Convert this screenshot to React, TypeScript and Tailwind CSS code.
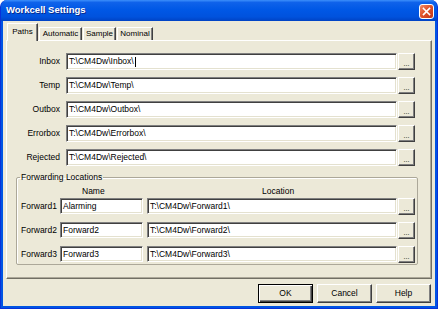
import React from "react";

const font = { fontFamily: '"Liberation Sans", Arial, sans-serif' };

const sunken =
  "bg-white border border-t-[#808080] border-l-[#808080] border-b-white border-r-white shadow-[inset_1px_1px_0_#404040,inset_-1px_-1px_0_#e4e1cf]";
const raised =
  "bg-[#ECE9D8] border border-t-white border-l-white border-b-[#404040] border-r-[#404040] shadow-[inset_-1px_-1px_0_#808080]";

function Dots() {
  return (
    <div className={`${raised} w-[17px] h-[17px] flex items-end justify-center pb-[2px] text-[7px] leading-none text-black`}>
      ...
    </div>
  );
}

function Field({ value, w, caret }: { value: string; w: string; caret?: boolean }) {
  return (
    <div className={`${sunken} ${w} h-full flex items-center pl-[2px] text-[8.5px] leading-none text-black whitespace-nowrap overflow-hidden`}>
      <span>{value}</span>
      {caret && <span className="inline-block w-px h-[10px] bg-black ml-px" />}
    </div>
  );
}

const paths = [
  ["Inbox", "T:\\CM4Dw\\Inbox\\"],
  ["Temp", "T:\\CM4Dw\\Temp\\"],
  ["Outbox", "T:\\CM4Dw\\Outbox\\"],
  ["Errorbox", "T:\\CM4Dw\\Errorbox\\"],
  ["Rejected", "T:\\CM4Dw\\Rejected\\"],
];

const forwards = [
  ["Forward1", "Alarming", "T:\\CM4Dw\\Forward1\\"],
  ["Forward2", "Forward2", "T:\\CM4Dw\\Forward2\\"],
  ["Forward3", "Forward3", "T:\\CM4Dw\\Forward3\\"],
];

export default function App() {
  return (
    <div className="w-[438px] h-[309px] bg-white" style={font}>
      <div className="w-full h-full rounded-t-[7px] overflow-hidden bg-[#0054E3] flex flex-col border border-[#0831D9] border-t-0">
        {/* Title bar */}
        <div className="h-[21px] shrink-0 flex items-start pl-[5px] pr-[3px] bg-[linear-gradient(to_bottom,#3c8ffb_0%,#0f62ea_12%,#0058e6_45%,#0052dd_80%,#0043c4_100%)]">
          <div className="mt-[5px] text-[9.5px] font-bold leading-none text-white [text-shadow:1px_1px_0_#0a2a8a]">
            Workcell Settings
          </div>
          <div className="ml-auto mt-[4px] w-[15px] h-[15px] rounded-[3px] border border-white bg-[linear-gradient(135deg,#f08a68_0%,#e0542c_45%,#c2351a_100%)] flex items-center justify-center">
            <svg width="9" height="9" viewBox="0 0 9 9">
              <path d="M1.5 1.5 L7.5 7.5 M7.5 1.5 L1.5 7.5" stroke="white" strokeWidth="1.6" strokeLinecap="square" />
            </svg>
          </div>
        </div>

        {/* Body */}
        <div className="flex-1 mx-[2px] mb-[2px] bg-[#ECE9D8] flex flex-col px-[3px] pt-[2px] text-black">
          {/* Tabs */}
          <div className="h-[17px] flex items-end pl-[1px]">
            <div className="relative z-10 -mb-[1px] h-[18px] w-[31px] bg-[#ECE9D8] border border-b-0 border-t-white border-l-white border-r-[#404040] shadow-[inset_-1px_0_0_#808080] flex items-start justify-center pt-[4px] text-[8px] leading-none">
              Paths
            </div>
            <div className="h-[13px] w-[43px] ml-[1px] border border-b-0 border-t-white border-l-white border-r-[#404040] shadow-[inset_-1px_0_0_#808080] flex items-center justify-center text-[8px] leading-none">
              Automatic
            </div>
            <div className="h-[13px] w-[33px] ml-[1px] border border-b-0 border-t-white border-l-white border-r-[#404040] shadow-[inset_-1px_0_0_#808080] flex items-center justify-center text-[8px] leading-none">
              Sample
            </div>
            <div className="h-[13px] w-[36px] ml-[1px] border border-b-0 border-t-white border-l-white border-r-[#404040] shadow-[inset_-1px_0_0_#808080] flex items-center justify-center text-[8px] leading-none">
              Nominal
            </div>
          </div>

          {/* Panel */}
          <div className="w-[426px] h-[239px] border border-t-white border-l-white border-b-[#716F64] border-r-[#716F64] shadow-[inset_-1px_-1px_0_#aca899] flex flex-col pt-[12px]">
            <div className="flex flex-col gap-[7px]">
              {paths.map(([label, value], i) => (
                <div key={label} className="h-[17px] flex items-center">
                  <div className="w-[53px] text-right text-[8.5px] leading-none">{label}</div>
                  <div className="ml-[6px] h-full">
                    <Field value={value} w="w-[331px]" caret={i === 0} />
                  </div>
                  <div className="ml-[1px]">
                    <Dots />
                  </div>
                </div>
              ))}
            </div>

            <fieldset className="ml-[9px] mt-[6px] w-[402px] h-[93px] border border-[#aca899] shadow-[inset_1px_1px_0_#fff] rounded-[2px] px-0">
              <legend className="ml-[3px] px-[1px] text-[8.5px] leading-[11px]">Forwarding Locations</legend>
              <div className="flex flex-col">
                <div className="h-[15px] flex items-center pt-[2px] text-[8.5px] leading-none">
                  <div className="w-[65px]" />
                  <div className="w-[180px]">Name</div>
                  <div>Location</div>
                </div>
                <div className="flex flex-col gap-[8px]">
                  {forwards.map(([label, name, loc]) => (
                    <div key={label} className="h-[16px] flex items-center">
                      <div className="w-[43px] pl-[4px] text-[8.5px] leading-none">{label}</div>
                      <div className="h-full">
                        <Field value={name} w="w-[83px]" />
                      </div>
                      <div className="ml-[4px] h-full">
                        <Field value={loc} w="w-[250px]" />
                      </div>
                      <div className="ml-[1px]">
                        <Dots />
                      </div>
                    </div>
                  ))}
                </div>
              </div>
            </fieldset>
          </div>

          {/* Buttons */}
          <div className="mt-[5px] flex justify-end gap-[4px] pr-[1px]">
            <div className="w-[55px] h-[19px] border border-black bg-[#ECE9D8] shadow-[inset_1px_1px_0_#fff,inset_-1px_-1px_0_#404040,inset_-2px_-2px_0_#808080] flex items-center justify-center text-[8.5px] leading-none">
              OK
            </div>
            <div className={`${raised} w-[55px] h-[19px] flex items-center justify-center text-[8.5px] leading-none shadow-[inset_-1px_-1px_0_#808080,inset_1px_1px_0_#fbf3c0]`}>
              Cancel
            </div>
            <div className={`${raised} w-[55px] h-[19px] flex items-center justify-center text-[8.5px] leading-none`}>
              Help
            </div>
          </div>
        </div>
      </div>
    </div>
  );
}
